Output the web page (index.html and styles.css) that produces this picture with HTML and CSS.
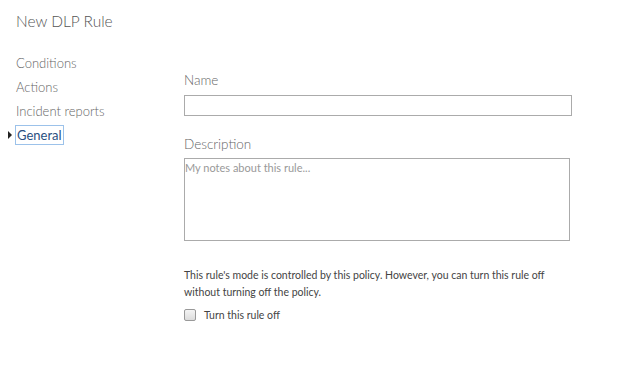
FILE: index.html
```html
<!DOCTYPE html>
<html lang="en">
<head>
    <meta charset="UTF-8">
    <title>New DLP Rule</title>
    <link rel="stylesheet" href="styles.css">
</head>
<body>
    <div class="page">
        <h1 class="title">New DLP Rule</h1>
        <div class="layout">
            <ul class="nav">
                <li>Conditions</li>
                <li>Actions</li>
                <li>Incident reports</li>
                <li class="current"><span class="focus">General</span></li>
            </ul>
            <div class="form">
                <label class="field-label" for="rule-name">Name</label>
                <input id="rule-name" class="text-input" type="text">
                <label class="field-label desc-label" for="rule-desc">Description</label>
                <textarea id="rule-desc" class="text-area" placeholder="My notes about this rule..."></textarea>
                <p class="note">This rule's mode is controlled by this policy. However, you can turn this rule off without turning off the policy.</p>
                <label class="check">
                    <span class="box"></span>
                    Turn this rule off
                </label>
            </div>
        </div>
    </div>
</body>
</html>
```

FILE: styles.css
```css
body {
    margin: 0;
    background: #fff;
    font-family: Lato, 'Open Sans', sans-serif;
    color: #666;
}

.page {
    padding: 8px 16px;
}

.title {
    margin: 0;
    font-size: 15.5px;
    font-weight: 300;
    color: #555;
    line-height: 26px;
}

.layout {
    display: grid;
    grid-template-columns: 168px 388px;
    margin-top: 17px;
}

.nav {
    list-style: none;
    margin: 0;
    padding: 0;
}

.nav li {
    font-size: 13px;
    font-weight: 300;
    line-height: 24px;
    color: #666;
}

.nav .current {
    position: relative;
}

.nav .current::before {
    content: '';
    position: absolute;
    left: -8px;
    top: 8px;
    border-left: 4px solid #222;
    border-top: 4px solid transparent;
    border-bottom: 4px solid transparent;
}

.focus {
    color: #2a4f7f;
    font-weight: 400;
    outline: 1px solid #9cc2ea;
    padding: 1px 1px;
}

.form {
    padding-top: 19px;
    display: flex;
    flex-direction: column;
}

.field-label {
    font-size: 13.5px;
    font-weight: 300;
    color: #666;
    line-height: 20px;
}

.text-input {
    box-sizing: border-box;
    width: 388px;
    height: 21px;
    margin: 5px 0 0;
    border: 1px solid #ababab;
    outline: none;
}

.desc-label {
    margin-top: 18px;
}

.text-area {
    box-sizing: border-box;
    width: 386px;
    height: 83px;
    margin: 4px 0 0;
    padding: 2px 0;
    border: 1px solid #ababab;
    resize: none;
    font-family: Lato, 'Open Sans', sans-serif;
    font-size: 11px;
    outline: none;
}

.text-area::placeholder {
    color: #999;
}

.note {
    margin: 26px 0 0;
    font-size: 10.5px;
    line-height: 17px;
    color: #444;
}

.check {
    display: flex;
    align-items: center;
    gap: 8px;
    margin-top: 8px;
    font-size: 10.5px;
    color: #444;
}

.box {
    width: 10px;
    height: 10px;
    border: 1px solid #999;
    border-radius: 2px;
    background: linear-gradient(#f4f4f4, #dcdcdc);
}
```
